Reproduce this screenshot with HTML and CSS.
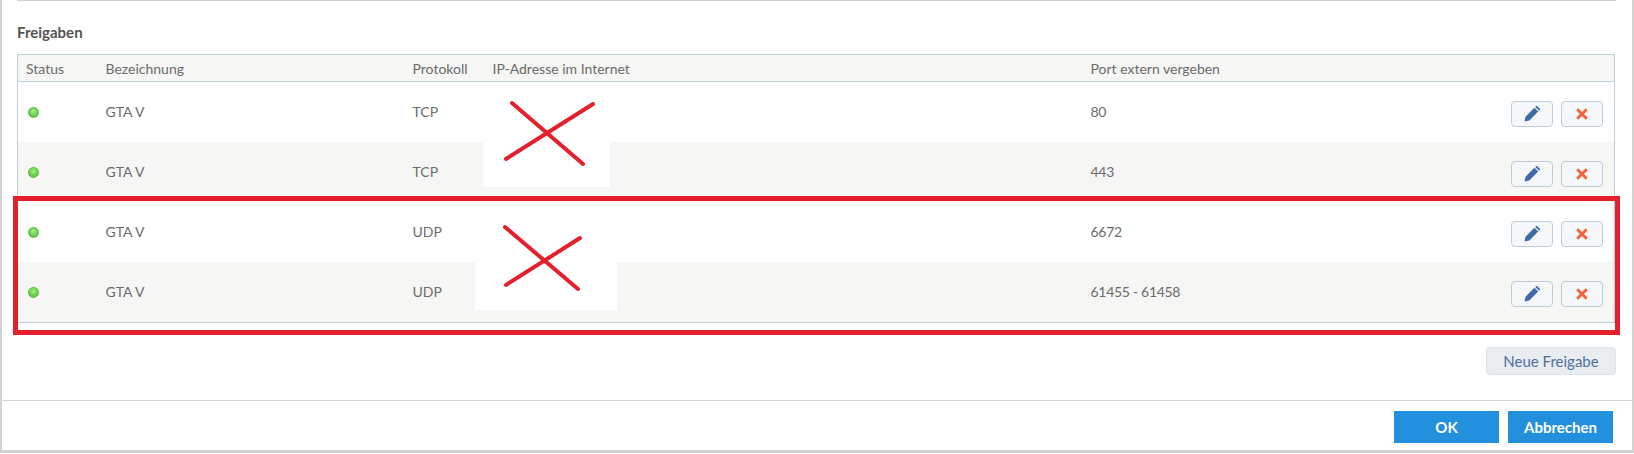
FILE: index.html
```html
<!DOCTYPE html>
<html lang="de">
<head>
<meta charset="utf-8">
<title>Freigaben</title>
<link rel="stylesheet" href="styles.css">
</head>
<body>
<div class="dialog">
  <div class="content">
    <div class="rule"></div>
    <h2 class="title">Freigaben</h2>
    <table class="table">
      <colgroup><col class="c1"><col class="c2"><col class="c3"><col class="c4"><col class="c5"><col class="c6"></colgroup>
      <thead><tr><th>Status</th><th>Bezeichnung</th><th>Protokoll</th><th>IP-Adresse im Internet</th><th>Port extern vergeben</th><th></th></tr></thead>
      <tbody>
        <tr><td><span class="dot"></span></td><td>GTA V</td><td>TCP</td><td></td><td class="port">80</td>
          <td class="actions"><button class="icon-btn"><svg viewBox="0 0 16 16" class="ico"><path d="M0.5 15.5l1-4.8L10.4 1.8l3.8 3.8-8.9 8.9z" fill="#3f6aa5"/><path d="M11.3 0.9l.5-.5a1.2 1.2 0 0 1 1.7 0l2.1 2.1a1.2 1.2 0 0 1 0 1.7l-.5.5z" fill="#3f6aa5"/></svg></button><button class="icon-btn"><svg viewBox="0 0 12 12" class="ico-x"><path d="M1.2 1.2l9.6 9.6M10.8 1.2l-9.6 9.6" stroke="#f4623a" stroke-width="2.8" fill="none"/></svg></button></td></tr>
        <tr><td><span class="dot"></span></td><td>GTA V</td><td>TCP</td><td></td><td class="port">443</td>
          <td class="actions"><button class="icon-btn"><svg viewBox="0 0 16 16" class="ico"><path d="M0.5 15.5l1-4.8L10.4 1.8l3.8 3.8-8.9 8.9z" fill="#3f6aa5"/><path d="M11.3 0.9l.5-.5a1.2 1.2 0 0 1 1.7 0l2.1 2.1a1.2 1.2 0 0 1 0 1.7l-.5.5z" fill="#3f6aa5"/></svg></button><button class="icon-btn"><svg viewBox="0 0 12 12" class="ico-x"><path d="M1.2 1.2l9.6 9.6M10.8 1.2l-9.6 9.6" stroke="#f4623a" stroke-width="2.8" fill="none"/></svg></button></td></tr>
        <tr><td><span class="dot"></span></td><td>GTA V</td><td>UDP</td><td></td><td class="port">6672</td>
          <td class="actions"><button class="icon-btn"><svg viewBox="0 0 16 16" class="ico"><path d="M0.5 15.5l1-4.8L10.4 1.8l3.8 3.8-8.9 8.9z" fill="#3f6aa5"/><path d="M11.3 0.9l.5-.5a1.2 1.2 0 0 1 1.7 0l2.1 2.1a1.2 1.2 0 0 1 0 1.7l-.5.5z" fill="#3f6aa5"/></svg></button><button class="icon-btn"><svg viewBox="0 0 12 12" class="ico-x"><path d="M1.2 1.2l9.6 9.6M10.8 1.2l-9.6 9.6" stroke="#f4623a" stroke-width="2.8" fill="none"/></svg></button></td></tr>
        <tr><td><span class="dot"></span></td><td>GTA V</td><td>UDP</td><td></td><td class="port">61455 - 61458</td>
          <td class="actions"><button class="icon-btn"><svg viewBox="0 0 16 16" class="ico"><path d="M0.5 15.5l1-4.8L10.4 1.8l3.8 3.8-8.9 8.9z" fill="#3f6aa5"/><path d="M11.3 0.9l.5-.5a1.2 1.2 0 0 1 1.7 0l2.1 2.1a1.2 1.2 0 0 1 0 1.7l-.5.5z" fill="#3f6aa5"/></svg></button><button class="icon-btn"><svg viewBox="0 0 12 12" class="ico-x"><path d="M1.2 1.2l9.6 9.6M10.8 1.2l-9.6 9.6" stroke="#f4623a" stroke-width="2.8" fill="none"/></svg></button></td></tr>
      </tbody>
    </table>
    <div class="new-row"><button class="new-btn">Neue Freigabe</button></div>
  </div>
  <div class="footer">
    <button class="primary ok">OK</button>
    <button class="primary cancel">Abbrechen</button>
  </div>
</div>
<svg class="annotation" width="1634" height="454" viewBox="0 0 1634 454">
  <rect x="483" y="95" width="127" height="92" fill="#fff"/>
  <rect x="475" y="222" width="142" height="88" fill="#fff"/>
  <path d="M512 103L583 164M593 104L506 159M505 227L578 289M580 238L506 285" stroke="#e3202b" stroke-width="4" stroke-linecap="round" fill="none"/>
  <rect x="15.5" y="198.5" width="1602" height="134" stroke="#e3202b" stroke-width="5" fill="none"/>
</svg>
</body>
</html>
```
FILE: styles.css
```css
* { box-sizing: border-box; }
html, body { margin: 0; padding: 0; background: #fff; }
body { width: 1634px; height: 454px; overflow: hidden; font-family: "Lato", "Liberation Sans", sans-serif; font-size: 14px; color: #6b6b6b; position: relative; }
.dialog { width: 1634px; height: 453px; background: #fff; border-left: 2px solid #d2d2d0; border-right: 2px solid #d2d2d0; border-bottom: 3px solid #d2d2d0; display: flex; flex-direction: column; }
.content { height: 401px; padding: 0 16px 0 15px; border-bottom: 1px solid #d4d4d4; margin: 0; }
.rule { height: 1px; background: #cfd3d4; }
.title { margin: 24px 0 0; font-size: 15px; line-height: 14px; font-weight: 700; color: #555; height: 14px; }
.table { margin-top: 15px; width: 1598px; border-collapse: collapse; table-layout: fixed; border-left: 1px solid #bccdd8; border-right: 1px solid #bccdd8; border-top: 1px solid #bccdd8; border-bottom: 1px solid #bccdd8; }
.c1 { width: 80px; } .c2 { width: 307px; } .c3 { width: 80px; } .c4 { width: 598px; } .c5 { width: 344px; } .c6 { width: auto; }
th { height: 27px; padding: 0 0 0 8px; background: #f6f6f4; border-bottom: 1px solid #bccdd8; text-align: left; font-weight: 400; color: #6b6b6b; font-size: 14px; }
td { height: 60px; padding: 0 0 0 8px; font-size: 14px; color: #6b6b6b; }
tbody tr:nth-child(even) td { background: #f6f6f4; }
tbody tr:last-child td { height: 61px; }
.port { letter-spacing: -0.3px; }
.dot { display: block; width: 11px; height: 11px; margin-left: 2px; margin-top: 2px; border-radius: 50%; border: 1px solid #5fbb47; background: radial-gradient(circle at 50% 38%, #a8ec88 0, #72d552 50%, #55b23f 100%); }
.actions { text-align: right; padding: 4px 11px 0 0; white-space: nowrap; }
.icon-btn { width: 42px; height: 26px; padding: 0; margin-left: 8px; background: #f5f7f8; border: 1px solid #bccdd8; border-radius: 4px; display: inline-flex; align-items: center; justify-content: center; vertical-align: middle; }
.ico { width: 16px; height: 16px; }
.ico-x { width: 12px; height: 12px; }
.new-row { display: flex; justify-content: flex-end; margin-top: 24px; }
.new-btn { width: 130px; height: 28px; background: #e9edf0; border: 1px solid #dde3e8; border-radius: 4px; color: #4f6f9f; font-family: inherit; font-size: 15px; padding: 0; }
.footer { display: flex; justify-content: flex-end; gap: 9px; padding: 10px 19px 0 0; }
.primary { height: 32px; background: #2390de; border: 0; color: #fff; font-family: inherit; font-size: 15px; font-weight: 700; padding: 0; }
.ok { width: 105px; }
.cancel { width: 105px; }
.annotation { position: absolute; left: 0; top: 0; pointer-events: none; }
```
